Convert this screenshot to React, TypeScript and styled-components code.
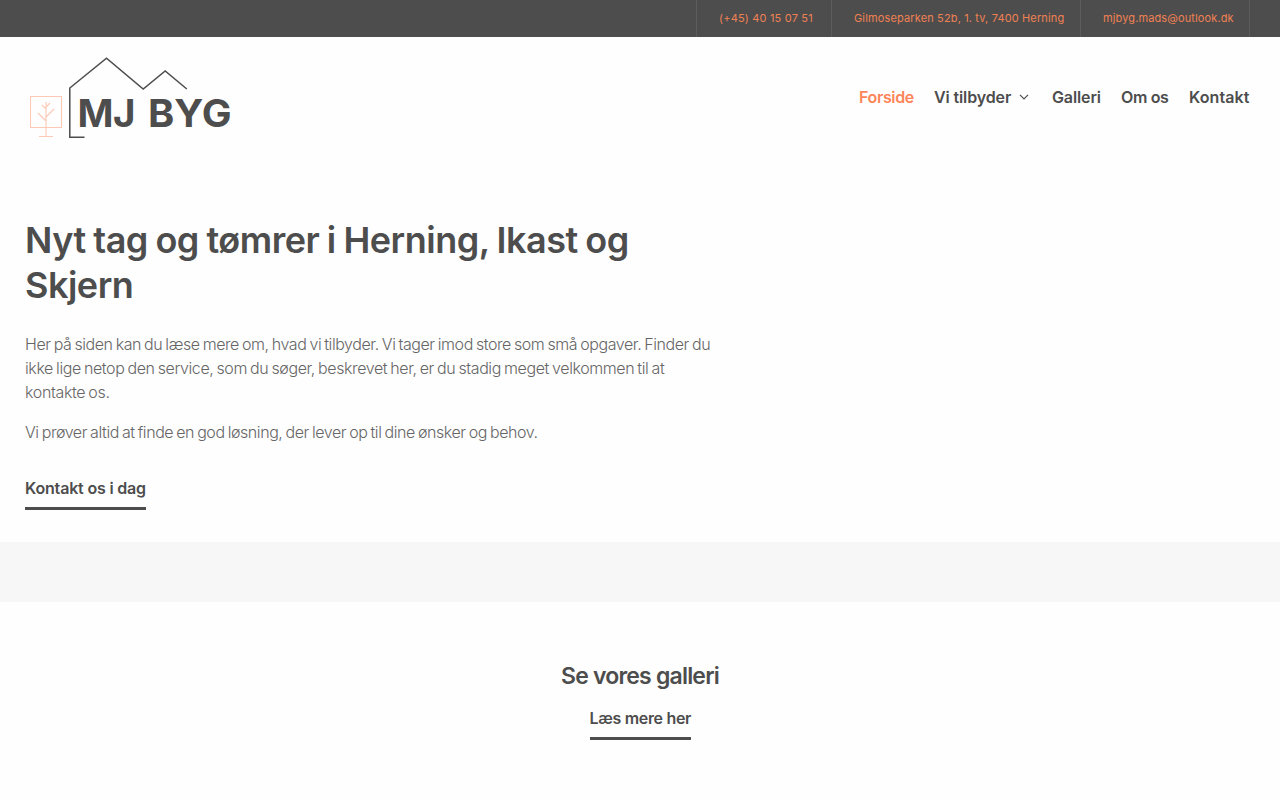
import React from 'react';
import styled, { createGlobalStyle } from 'styled-components';

const contacts = [
  { label: '(+45) 40 15 07 51', width: 135, spacing: 0.18 },
  { label: 'Gilmoseparken 52b, 1. tv, 7400 Herning', width: 249, spacing: 0.14 },
  { label: 'mjbyg.mads@outlook.dk', width: 170, spacing: 0.12 },
];

const menu = [
  { label: 'Forside', width: 55, spacing: -0.35, active: true },
  { label: 'Vi tilbyder', width: 98, spacing: -0.12, children: true },
  { label: 'Galleri', width: 49, spacing: -0.12 },
  { label: 'Om os', width: 48, spacing: -0.35 },
  { label: 'Kontakt', width: 61, spacing: 0.08 },
];

const Logo: React.FC = () => (
  <LogoStyle viewBox="0 0 202 84" role="img" aria-label="MJ BYG">
    <g fill="none" stroke="#fbc9b5" strokeWidth="1.1">
      <path d="M.5 40.5h31v31H.5zM16 46v34M9 80.5h14M16 65l-8-8M16 61l8-8M16 53l-4-4M16 51l4-4" />
    </g>
    <path
      d="M54.5 81.2H39.8V32L76.5 2.2 113.2 33l22-18L156.8 33"
      fill="none"
      stroke="#4d4d4d"
      strokeWidth="1.5"
    />
    <LogoText x="47.500" y="70.500" textLength="36" lengthAdjust="spacingAndGlyphs">M</LogoText>
    <LogoText x="83" y="70.500" textLength="22.500" lengthAdjust="spacingAndGlyphs">J</LogoText>
    <LogoText x="118" y="70.500" textLength="83.500" lengthAdjust="spacingAndGlyphs">BYG</LogoText>
  </LogoStyle>
);

const App: React.FC = () => {
  return (
    <>
      <GlobalStyle />
      <Topbar>
        {contacts.map(item => (
          <ContactItem key={item.label} $width={item.width} $spacing={item.spacing}>
            {item.label}
          </ContactItem>
        ))}
      </Topbar>

      <Header>
        <Logo />
        <Nav>
          {menu.map(item => (
            <NavLink key={item.label} href="#" $width={item.width} $spacing={item.spacing} $active={item.active}>
              {item.label}
              {item.children && (
                <Chevron viewBox="0 0 10 6">
                  <path d="M1 .8l4 4 4-4" />
                </Chevron>
              )}
            </NavLink>
          ))}
        </Nav>
      </Header>

      <Hero>
        <Title>
          Nyt tag og tømrer i Herning, Ikast og
          <br />
          Skjern
        </Title>
        <Text>
          <Line $spacing={-0.43}>
            Her på siden kan du læse mere om, hvad vi tilbyder. Vi tager imod store som små opgaver. Finder du
          </Line>
          <Line $spacing={-0.4}>
            ikke lige netop den service, som du søger, beskrevet her, er du stadig meget velkommen til at
          </Line>
          <Line $spacing={-0.35}>kontakte os.</Line>
        </Text>
        <Text>
          <Line $spacing={-0.43}>Vi prøver altid at finde en god løsning, der lever op til dine ønsker og behov.</Line>
        </Text>
        <HeroAction>
          <ActionLink href="#" $width={121} $spacing={-0.18}>
            Kontakt os i dag
          </ActionLink>
        </HeroAction>
      </Hero>

      <Band />

      <Gallery>
        <Subtitle>Se vores galleri</Subtitle>
        <ActionLink href="#" $width={101} $spacing={-0.32}>
          Læs mere her
        </ActionLink>
      </Gallery>
    </>
  );
};

export default App;

const GlobalStyle = createGlobalStyle`
  * {
    box-sizing: border-box;
  }

  body {
    margin: 0;
    background: #fefefe;
    color: #4d4d4d;
    font-family: Inter, 'Liberation Sans', sans-serif;
    overflow: hidden;
  }
`;

const Topbar = styled.div`
  display: flex;
  justify-content: flex-end;
  height: 37px;
  padding-right: 30px;
  background: #4d4d4d;
`;

const ContactItem = styled.div<{ $width: number; $spacing: number }>`
  width: ${p => p.$width}px;
  padding-left: 22px;
  border-left: 1px solid #5c5c5c;
  color: #f08154;
  font-size: 11px;
  line-height: 37px;
  letter-spacing: ${p => p.$spacing}px;
  white-space: nowrap;

  &:last-child {
    border-right: 1px solid #5c5c5c;
  }
`;

const Header = styled.header`
  display: flex;
  justify-content: space-between;
  align-items: center;
  height: 121px;
  padding: 0 30px;
`;

const LogoStyle = styled.svg`
  width: 202px;
  height: 84px;
`;

const LogoText = styled.text`
  fill: #4d4d4d;
  font-size: 38.5px;
  font-weight: 700;
`;

const Nav = styled.nav`
  display: flex;
  gap: 20px;
  padding-bottom: 2px;
`;

const NavLink = styled.a<{ $width: number; $spacing: number; $active?: boolean }>`
  display: flex;
  justify-content: space-between;
  align-items: center;
  width: ${p => p.$width}px;
  color: ${p => (p.$active ? '#ff8559' : '#4d4d4d')};
  font-size: 16px;
  font-weight: 600;
  line-height: 24px;
  letter-spacing: ${p => p.$spacing}px;
  text-decoration: none;
  white-space: nowrap;
`;

const Chevron = styled.svg`
  width: 10px;
  height: 6px;
  margin-right: 3px;
  fill: none;
  stroke: currentColor;
  stroke-width: 1.2;
`;

const Hero = styled.section`
  height: 384px;
  padding: 60px 25px 0;
`;

const Title = styled.h1`
  margin: 0 0 24px;
  font-size: 36px;
  font-weight: 600;
  line-height: 45px;
  letter-spacing: -0.49px;
  word-spacing: -1px;
`;

const Text = styled.p`
  margin: 0 0 16px;
  color: #666;
  font-size: 16px;
  font-weight: 300;
  line-height: 24px;
  word-spacing: -1px;
  white-space: nowrap;
`;

const Line = styled.span<{ $spacing: number }>`
  display: block;
  letter-spacing: ${p => p.$spacing}px;
`;

const HeroAction = styled.div`
  margin-top: 32px;
`;

const ActionLink = styled.a<{ $width: number; $spacing: number }>`
  display: block;
  width: ${p => p.$width}px;
  height: 34px;
  border-bottom: 3px solid #4d4d4d;
  color: #4d4d4d;
  font-size: 16px;
  font-weight: 600;
  line-height: 24px;
  letter-spacing: ${p => p.$spacing}px;
  text-decoration: none;
  white-space: nowrap;
`;

const Band = styled.div`
  height: 60px;
  background: #f7f7f7;
`;

const Gallery = styled.section`
  display: flex;
  flex-direction: column;
  align-items: center;
  padding-top: 59px;
`;

const Subtitle = styled.h2`
  margin: 0 0 15px;
  font-size: 23px;
  font-weight: 600;
  line-height: 30px;
  letter-spacing: -0.8px;
`;
